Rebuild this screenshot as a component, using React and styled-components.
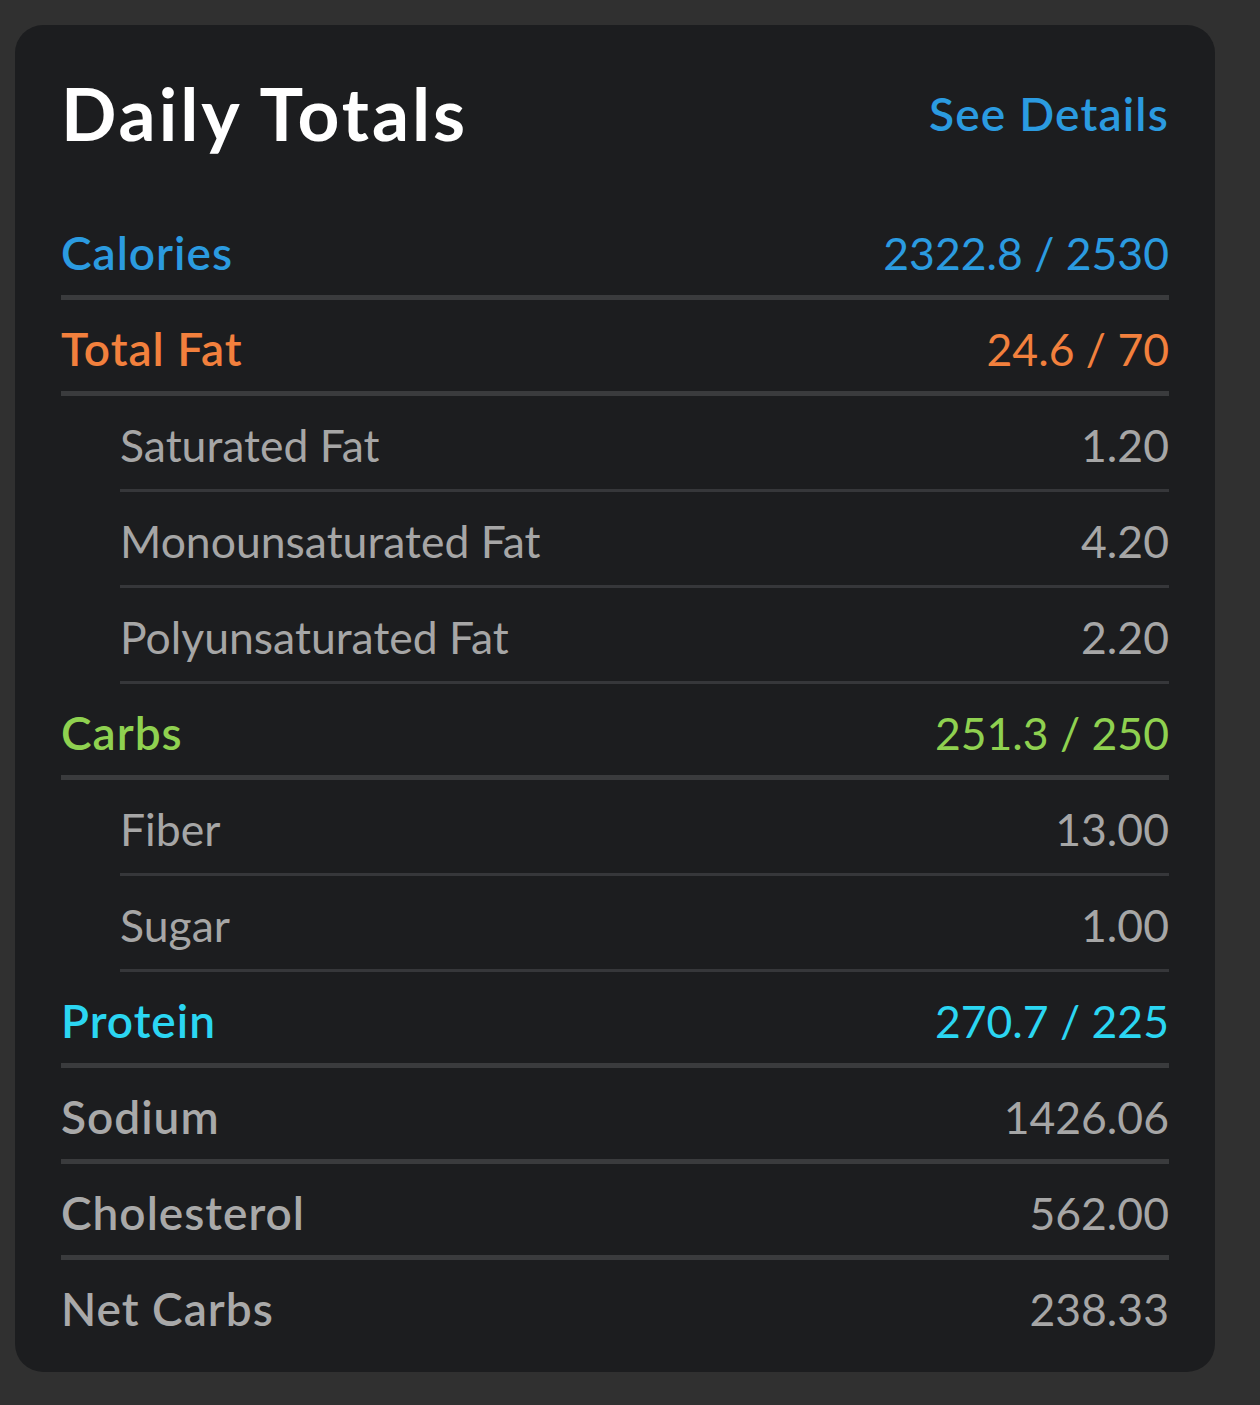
import React from 'react'
import styled, { createGlobalStyle } from 'styled-components'

const GlobalStyle = createGlobalStyle`
  body {
    margin: 0;
    background: #303030;
    font-family: Lato, "Noto Sans", sans-serif;
  }
`

const rows = [
  { label: 'Calories', value: '2322.8 / 2530', color: '#2b9be0', main: true },
  { label: 'Total Fat', value: '24.6 / 70', color: '#f2803d', main: true },
  { label: 'Saturated Fat', value: '1.20', sub: true },
  { label: 'Monounsaturated Fat', value: '4.20', sub: true },
  { label: 'Polyunsaturated Fat', value: '2.20', sub: true },
  { label: 'Carbs', value: '251.3 / 250', color: '#8fd150', main: true },
  { label: 'Fiber', value: '13.00', sub: true },
  { label: 'Sugar', value: '1.00', sub: true },
  { label: 'Protein', value: '270.7 / 225', color: '#2bd6f2', main: true },
  { label: 'Sodium', value: '1426.06', main: true },
  { label: 'Cholesterol', value: '562.00', main: true },
  { label: 'Net Carbs', value: '238.33', main: true, last: true },
]

const App = () => {
  return (
    <>
      <GlobalStyle />
      <Card>
        <Header>
          <Title>Daily Totals</Title>
          <Link>See Details</Link>
        </Header>
        {rows.map((r) => (
          <Row key={r.label} $sub={r.sub} $last={r.last}>
            <Label $sub={r.sub} $color={r.color}>{r.label}</Label>
            <Value $color={r.color}>{r.value}</Value>
          </Row>
        ))}
      </Card>
    </>
  )
}

export default App

const Card = styled.div`
  width: 1200px;
  box-sizing: border-box;
  margin: 25px 0 0 15px;
  padding: 0 46px 16px 46px;
  background: #1c1d1f;
  border-radius: 28px;
`

const Header = styled.div`
  display: flex;
  align-items: center;
  justify-content: space-between;
  height: 80px;
  padding-top: 48px;
  margin-bottom: 51px;
`

const Title = styled.h1`
  margin: 0;
  font-size: 73px;
  font-weight: 700;
  color: #ffffff;
  letter-spacing: 3px;
`

const Link = styled.span`
  font-size: 46px;
  font-weight: 600;
  color: #2b9be0;
  letter-spacing: 1.2px;
`

const Row = styled.div`
  display: flex;
  align-items: center;
  justify-content: space-between;
  box-sizing: border-box;
  height: 96px;
  padding-top: ${(p) => (p.$last ? '0' : p.$sub ? '3px' : '5px')};
  margin-left: ${(p) => (p.$sub ? '59px' : '0')};
  border-bottom: ${(p) =>
    p.$last ? 'none' : p.$sub ? '3px solid #36373a' : '5px solid #3a3b3d'};
`

const Label = styled.span`
  font-size: ${(p) => (p.$sub ? '44.5px' : '46px')};
  font-weight: ${(p) => (p.$sub ? 400 : 600)};
  letter-spacing: ${(p) => (p.$sub ? '0' : '1px')};
  color: ${(p) => p.$color || (p.$sub ? '#a6a6a6' : '#a9a9a9')};
`

const Value = styled.span`
  font-size: 44.5px;
  font-weight: 400;
  color: ${(p) => p.$color || '#a6a6a6'};
`
